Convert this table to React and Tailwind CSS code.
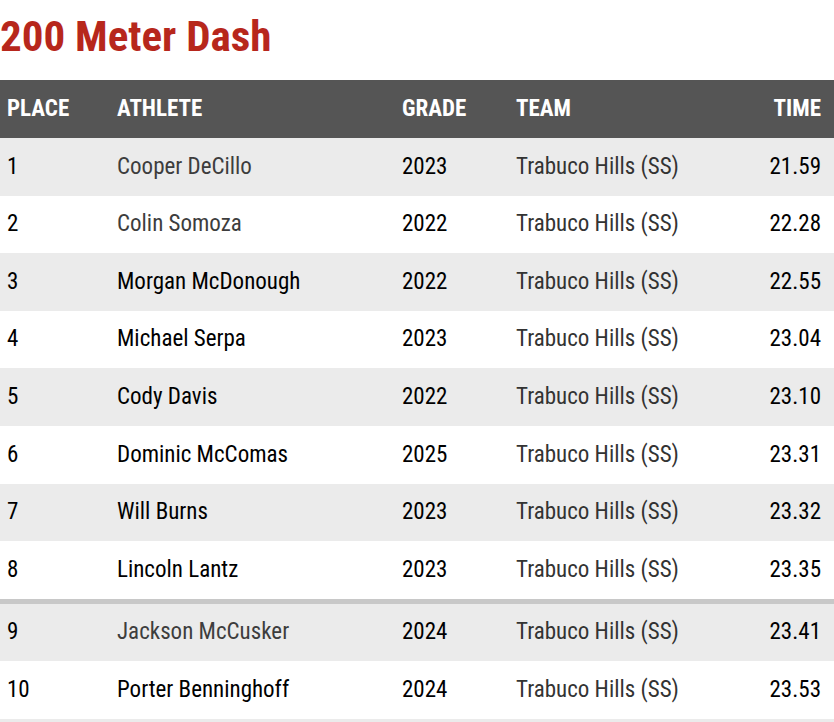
const rows = [
  { place: 1, athlete: "Cooper DeCillo", grade: 2023, time: "21.59", muted: true },
  { place: 2, athlete: "Colin Somoza", grade: 2022, time: "22.28", muted: true },
  { place: 3, athlete: "Morgan McDonough", grade: 2022, time: "22.55" },
  { place: 4, athlete: "Michael Serpa", grade: 2023, time: "23.04" },
  { place: 5, athlete: "Cody Davis", grade: 2022, time: "23.10" },
  { place: 6, athlete: "Dominic McComas", grade: 2025, time: "23.31" },
  { place: 7, athlete: "Will Burns", grade: 2023, time: "23.32" },
  { place: 8, athlete: "Lincoln Lantz", grade: 2023, time: "23.35" },
  { place: 9, athlete: "Jackson McCusker", grade: 2024, time: "23.41", muted: true, divider: true },
  { place: 10, athlete: "Porter Benninghoff", grade: 2024, time: "23.53" },
];

function Row({ row, index }) {
  const shaded = index % 2 === 0;
  return (
    <>
      {row.divider && <div className="h-[5px] bg-[#c8c8c8]"></div>}
      <div
        className={`grid grid-cols-[110px_285px_114px_1fr_auto] items-center h-[57.6px] pl-[7px] pr-[13px] text-[23px] ${
          shaded ? "bg-[#ebebeb]" : "bg-white"
        }`}
      >
        <div className="text-black">{row.place}</div>
        <div className={row.muted ? "text-[#3d3d3d]" : "text-black"}>{row.athlete}</div>
        <div className="text-black">{row.grade}</div>
        <div className="text-[#333]">Trabuco Hills (SS)</div>
        <div className="text-black text-right">{row.time}</div>
      </div>
    </>
  );
}

export default function App() {
  return (
    <div
      className="w-[834px] h-[722px] overflow-hidden bg-white [font-stretch:77%]"
      style={{ fontFamily: "Roboto, 'Liberation Sans', sans-serif" }}
    >
      <h1 className="text-[43px] leading-none font-bold text-[#b7271c] pt-[15px] h-[80px]">
        200 Meter Dash
      </h1>
      <div className="grid grid-cols-[110px_285px_114px_1fr_auto] items-center h-[58px] bg-[#555555] pl-[7px] pr-[13px] text-[23px] font-bold text-white uppercase">
        <div>Place</div>
        <div>Athlete</div>
        <div>Grade</div>
        <div>Team</div>
        <div className="text-right">Time</div>
      </div>
      {rows.map((row, i) => (
        <Row key={row.place} row={row} index={i} />
      ))}
      <div className="h-[4px] bg-[#ebebeb]"></div>
    </div>
  );
}
